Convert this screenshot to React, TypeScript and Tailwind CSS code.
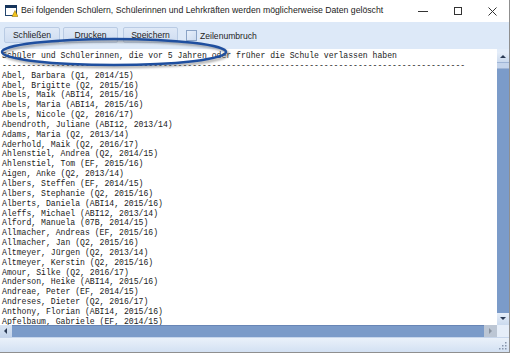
import React from 'react';

const MONO = { fontFamily: '"Liberation Mono", "Courier New", monospace' };
const UI = { fontFamily: '"Liberation Sans", Arial, sans-serif' };

const entries = [
    'Abel, Barbara (Q1, 2014/15)',
    'Abel, Brigitte (Q2, 2015/16)',
    'Abels, Maik (ABI14, 2015/16)',
    'Abels, Maria (ABI14, 2015/16)',
    'Abels, Nicole (Q2, 2016/17)',
    'Abendroth, Juliane (ABI12, 2013/14)',
    'Adams, Maria (Q2, 2013/14)',
    'Aderhold, Maik (Q2, 2016/17)',
    'Ahlenstiel, Andrea (Q2, 2014/15)',
    'Ahlenstiel, Tom (EF, 2015/16)',
    'Aigen, Anke (Q2, 2013/14)',
    'Albers, Steffen (EF, 2014/15)',
    'Albers, Stephanie (Q2, 2015/16)',
    'Alberts, Daniela (ABI14, 2015/16)',
    'Aleffs, Michael (ABI12, 2013/14)',
    'Alford, Manuela (07B, 2014/15)',
    'Allmacher, Andreas (EF, 2015/16)',
    'Allmacher, Jan (Q2, 2015/16)',
    'Altmeyer, Jürgen (Q2, 2013/14)',
    'Altmeyer, Kerstin (Q2, 2015/16)',
    'Amour, Silke (Q2, 2016/17)',
    'Anderson, Heike (ABI14, 2015/16)',
    'Andreae, Peter (EF, 2014/15)',
    'Andreses, Dieter (Q2, 2016/17)',
    'Anthony, Florian (ABI14, 2015/16)',
    'Apfelbaum, Gabriele (EF, 2014/15)',
];

function Arrow({ dir, color = '#2b3a55' }: { dir: 'up' | 'down' | 'left' | 'right'; color?: string }) {
    const pts = {
        up: '1,5 4,2 7,5',
        down: '1,2 4,5 7,2',
        left: '5,1 2,4 5,7',
        right: '2,1 5,4 2,7',
    }[dir];
    return (
        <svg width="8" height="8" viewBox="0 0 8 8">
            <polygon points={pts} fill={color} />
        </svg>
    );
}

function ToolButton({ label, className }: { label: string; className: string }) {
    return (
        <div className={`h-[16px] flex items-center justify-center rounded-[2px] border border-[#b9cbe4] bg-gradient-to-b from-[#dfe9f7] to-[#cfddf1] text-[8.6px] text-[#1e1e1e] ${className}`}>
            {label}
        </div>
    );
}

export default function App() {
    return (
        <div className="relative w-[510px] h-[353px] flex flex-col overflow-hidden bg-white border-r border-b border-[#8f8f8f]" style={UI}>
            {/* title bar */}
            <div className="h-[22px] flex items-center shrink-0 bg-white">
                <svg className="ml-[5px] shrink-0" width="13" height="12" viewBox="0 0 13 12">
                    <rect x="0.5" y="0.5" width="11" height="10" fill="#fff" stroke="#24466f" />
                    <rect x="0" y="0" width="12" height="3" fill="#16355c" />
                    <polygon points="7,11.5 10,5.5 13,11.5" fill="#f2c31b" stroke="#8a6a00" strokeWidth="0.5" />
                </svg>
                <span className="ml-[3px] text-[8.7px] text-[#1b1b1b] whitespace-nowrap">
                    Bei folgenden Schülern, Schülerinnen und Lehrkräften werden möglicherweise Daten gelöscht
                </span>
                <div className="ml-auto flex items-center h-full shrink-0">
                    <div className="w-[36px] flex justify-center">
                        <div className="w-[10px] h-px bg-[#333]" />
                    </div>
                    <div className="w-[34px] flex justify-center">
                        <div className="w-[8px] h-[8px] border border-[#333]" />
                    </div>
                    <div className="w-[34px] flex justify-center">
                        <svg width="9" height="9" viewBox="0 0 9 9">
                            <path d="M0.5 0.5 L8.5 8.5 M8.5 0.5 L0.5 8.5" stroke="#333" strokeWidth="1" />
                        </svg>
                    </div>
                </div>
            </div>

            {/* toolbar */}
            <div className="h-[27px] shrink-0 flex items-start pt-[5px] bg-[#dde9f8]">
                <ToolButton label="Schließen" className="ml-[4px] w-[56px]" />
                <ToolButton label="Drucken" className="ml-[3px] w-[55px]" />
                <ToolButton label="Speichern" className="ml-[5px] w-[55px]" />
                <div className="ml-[8px] mt-[3px] w-[11px] h-[11px] border border-[#8aa3c6] bg-gradient-to-br from-[#e8f0fb] to-[#cddcf0]" />
                <span className="ml-[3px] mt-[3px] text-[8.6px] text-[#1e1e1e]">Zeilenumbruch</span>
            </div>

            {/* text area */}
            <div className="h-[276px] shrink-0 flex">
                <div className="flex-1 overflow-hidden pl-[2px] pt-[2px] text-[8.13px] leading-[9.85px] text-[#1a1a1a] whitespace-pre" style={MONO}>
                    <div>Schüler und Schülerinnen, die vor 5 Jahren oder früher die Schule verlassen haben</div>
                    <div>{'-'.repeat(95)}</div>
                    {entries.map((e) => (
                        <div key={e}>{e}</div>
                    ))}
                </div>
                <div className="w-[12px] flex flex-col bg-[#7b9bc9]">
                    <div className="h-[3px] bg-[#e2ecf9]" />
                    <div className="h-[10px] flex items-center justify-center bg-gradient-to-b from-[#e6eef9] to-[#cbdaee]">
                        <Arrow dir="up" />
                    </div>
                    <div className="h-[7px] bg-[#c4d4eb] border-y border-[#9fb5d6]" />
                    <div className="flex-1" />
                    <div className="h-[12px] flex items-center justify-center bg-gradient-to-b from-[#e6eef9] to-[#cbdaee]">
                        <Arrow dir="down" />
                    </div>
                </div>
            </div>

            {/* horizontal scrollbar */}
            <div className="h-[12px] shrink-0 flex">
                <div className="w-[12px] flex items-center justify-center bg-gradient-to-b from-[#d9e4f3] to-[#c3d3ea]">
                    <Arrow dir="left" />
                </div>
                <div className="flex-1 bg-[#7b9bc9] border-t border-[#6886b6]" />
                <div className="w-[13px] flex items-center justify-center bg-[#bcc6d4]">
                    <Arrow dir="right" color="#8a93a0" />
                </div>
                <div className="w-[12px] bg-[#e6eef9]" />
            </div>

            {/* status bar */}
            <div className="flex-1 relative bg-gradient-to-b from-[#eaf1fa] to-[#d3e1f3] border-t border-[#c7d6ec]">
                <svg className="absolute right-[2px] bottom-[2px]" width="9" height="9" viewBox="0 0 9 9">
                    {[
                        [7, 1], [4, 4], [7, 4], [1, 7], [4, 7], [7, 7],
                    ].map(([x, y]) => (
                        <rect key={`${x}-${y}`} x={x} y={y} width="1.5" height="1.5" fill="#8796ad" />
                    ))}
                </svg>
            </div>

            {/* annotation ellipse */}
            <svg className="absolute left-0 top-[34px] pointer-events-none" width="244" height="40" viewBox="0 0 244 40">
                <defs>
                    <filter id="shadow" x="-10%" y="-40%" width="120%" height="180%">
                        <feGaussianBlur stdDeviation="1.2" />
                    </filter>
                </defs>
                <ellipse cx="116" cy="20" rx="112" ry="13" fill="none" stroke="#6d6d6d" strokeWidth="2.5" opacity="0.6" filter="url(#shadow)" />
                <ellipse cx="114" cy="18" rx="112" ry="13" fill="none" stroke="#1f4f9f" strokeWidth="2.5" />
            </svg>
        </div>
    );
}
